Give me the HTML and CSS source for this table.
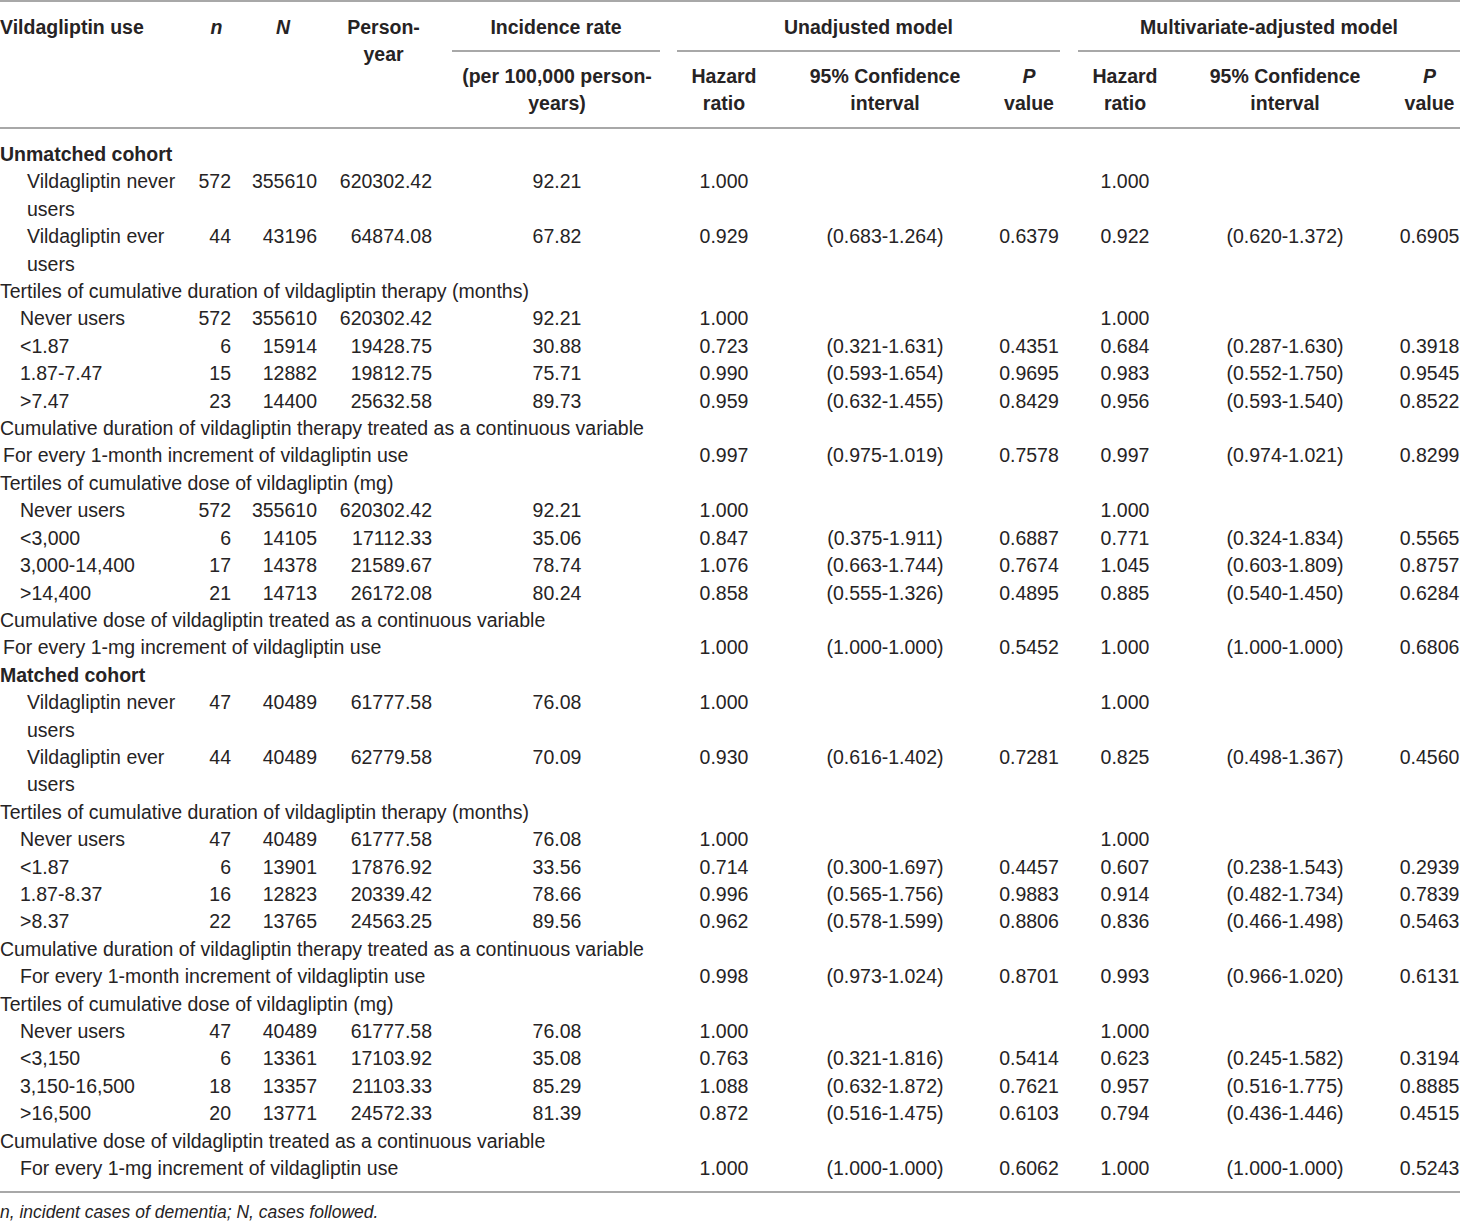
FILE: index.html
```html
<!DOCTYPE html>
<html lang="en">
<head>
    <meta charset="UTF-8">
    <title>Vildagliptin use and dementia risk</title>
    <link rel="stylesheet" href="styles.css">
</head>
<body>
    <table class="data-table">
        <colgroup>
            <col class="c-label">
            <col class="c-n">
            <col class="c-bign">
            <col class="c-py">
            <col class="c-ir">
            <col class="c-hr">
            <col class="c-ci">
            <col class="c-p">
            <col class="c-hr2">
            <col class="c-ci2">
            <col class="c-p2">
        </colgroup>
        <thead>
            <tr class="head-top">
                <th rowspan="2" class="left">Vildagliptin use</th>
                <th rowspan="2"><i>n</i></th>
                <th rowspan="2"><i>N</i></th>
                <th rowspan="2">Person-<br>year</th>
                <th><div class="span-head span-ir">Incidence rate</div></th>
                <th colspan="3"><div class="span-head span-un">Unadjusted model</div></th>
                <th colspan="3"><div class="span-head span-mv">Multivariate-adjusted model</div></th>
            </tr>
            <tr class="head-sub">
                <th>(per 100,000 person-<br>years)</th>
                <th>Hazard<br>ratio</th>
                <th>95% Confidence<br>interval</th>
                <th class="pv"><i>P</i><br>value</th>
                <th>Hazard<br>ratio</th>
                <th>95% Confidence<br>interval</th>
                <th class="pv2"><i>P</i><br>value</th>
            </tr>
        </thead>
        <tbody>
            <tr class="first"><td colspan="11" class="cohort">Unmatched cohort</td></tr>
            <tr><td class="ind2">Vildagliptin never users</td><td class="num">572</td><td class="num">355610</td><td class="num">620302.42</td><td class="ctr">92.21</td><td class="ctr">1.000</td><td></td><td></td><td class="ctr">1.000</td><td></td><td></td></tr>
            <tr><td class="ind2">Vildagliptin ever users</td><td class="num">44</td><td class="num">43196</td><td class="num">64874.08</td><td class="ctr">67.82</td><td class="ctr">0.929</td><td class="ctr">(0.683-1.264)</td><td class="ctr">0.6379</td><td class="ctr">0.922</td><td class="ctr">(0.620-1.372)</td><td class="p2">0.6905</td></tr>
            <tr><td colspan="11">Tertiles of cumulative duration of vildagliptin therapy (months)</td></tr>
            <tr><td class="ind1">Never users</td><td class="num">572</td><td class="num">355610</td><td class="num">620302.42</td><td class="ctr">92.21</td><td class="ctr">1.000</td><td></td><td></td><td class="ctr">1.000</td><td></td><td></td></tr>
            <tr><td class="ind1">&lt;1.87</td><td class="num">6</td><td class="num">15914</td><td class="num">19428.75</td><td class="ctr">30.88</td><td class="ctr">0.723</td><td class="ctr">(0.321-1.631)</td><td class="ctr">0.4351</td><td class="ctr">0.684</td><td class="ctr">(0.287-1.630)</td><td class="p2">0.3918</td></tr>
            <tr><td class="ind1">1.87-7.47</td><td class="num">15</td><td class="num">12882</td><td class="num">19812.75</td><td class="ctr">75.71</td><td class="ctr">0.990</td><td class="ctr">(0.593-1.654)</td><td class="ctr">0.9695</td><td class="ctr">0.983</td><td class="ctr">(0.552-1.750)</td><td class="p2">0.9545</td></tr>
            <tr><td class="ind1">&gt;7.47</td><td class="num">23</td><td class="num">14400</td><td class="num">25632.58</td><td class="ctr">89.73</td><td class="ctr">0.959</td><td class="ctr">(0.632-1.455)</td><td class="ctr">0.8429</td><td class="ctr">0.956</td><td class="ctr">(0.593-1.540)</td><td class="p2">0.8522</td></tr>
            <tr><td colspan="11">Cumulative duration of vildagliptin therapy treated as a continuous variable</td></tr>
            <tr><td colspan="5" class="ind0">For every 1-month increment of vildagliptin use</td><td class="ctr">0.997</td><td class="ctr">(0.975-1.019)</td><td class="ctr">0.7578</td><td class="ctr">0.997</td><td class="ctr">(0.974-1.021)</td><td class="p2">0.8299</td></tr>
            <tr><td colspan="11">Tertiles of cumulative dose of vildagliptin (mg)</td></tr>
            <tr><td class="ind1">Never users</td><td class="num">572</td><td class="num">355610</td><td class="num">620302.42</td><td class="ctr">92.21</td><td class="ctr">1.000</td><td></td><td></td><td class="ctr">1.000</td><td></td><td></td></tr>
            <tr><td class="ind1">&lt;3,000</td><td class="num">6</td><td class="num">14105</td><td class="num">17112.33</td><td class="ctr">35.06</td><td class="ctr">0.847</td><td class="ctr">(0.375-1.911)</td><td class="ctr">0.6887</td><td class="ctr">0.771</td><td class="ctr">(0.324-1.834)</td><td class="p2">0.5565</td></tr>
            <tr><td class="ind1">3,000-14,400</td><td class="num">17</td><td class="num">14378</td><td class="num">21589.67</td><td class="ctr">78.74</td><td class="ctr">1.076</td><td class="ctr">(0.663-1.744)</td><td class="ctr">0.7674</td><td class="ctr">1.045</td><td class="ctr">(0.603-1.809)</td><td class="p2">0.8757</td></tr>
            <tr><td class="ind1">&gt;14,400</td><td class="num">21</td><td class="num">14713</td><td class="num">26172.08</td><td class="ctr">80.24</td><td class="ctr">0.858</td><td class="ctr">(0.555-1.326)</td><td class="ctr">0.4895</td><td class="ctr">0.885</td><td class="ctr">(0.540-1.450)</td><td class="p2">0.6284</td></tr>
            <tr><td colspan="11">Cumulative dose of vildagliptin treated as a continuous variable</td></tr>
            <tr><td colspan="5" class="ind0">For every 1-mg increment of vildagliptin use</td><td class="ctr">1.000</td><td class="ctr">(1.000-1.000)</td><td class="ctr">0.5452</td><td class="ctr">1.000</td><td class="ctr">(1.000-1.000)</td><td class="p2">0.6806</td></tr>

            <tr><td colspan="11" class="cohort">Matched cohort</td></tr>
            <tr><td class="ind2">Vildagliptin never users</td><td class="num">47</td><td class="num">40489</td><td class="num">61777.58</td><td class="ctr">76.08</td><td class="ctr">1.000</td><td></td><td></td><td class="ctr">1.000</td><td></td><td></td></tr>
            <tr><td class="ind2">Vildagliptin ever users</td><td class="num">44</td><td class="num">40489</td><td class="num">62779.58</td><td class="ctr">70.09</td><td class="ctr">0.930</td><td class="ctr">(0.616-1.402)</td><td class="ctr">0.7281</td><td class="ctr">0.825</td><td class="ctr">(0.498-1.367)</td><td class="p2">0.4560</td></tr>
            <tr><td colspan="11">Tertiles of cumulative duration of vildagliptin therapy (months)</td></tr>
            <tr><td class="ind1">Never users</td><td class="num">47</td><td class="num">40489</td><td class="num">61777.58</td><td class="ctr">76.08</td><td class="ctr">1.000</td><td></td><td></td><td class="ctr">1.000</td><td></td><td></td></tr>
            <tr><td class="ind1">&lt;1.87</td><td class="num">6</td><td class="num">13901</td><td class="num">17876.92</td><td class="ctr">33.56</td><td class="ctr">0.714</td><td class="ctr">(0.300-1.697)</td><td class="ctr">0.4457</td><td class="ctr">0.607</td><td class="ctr">(0.238-1.543)</td><td class="p2">0.2939</td></tr>
            <tr><td class="ind1">1.87-8.37</td><td class="num">16</td><td class="num">12823</td><td class="num">20339.42</td><td class="ctr">78.66</td><td class="ctr">0.996</td><td class="ctr">(0.565-1.756)</td><td class="ctr">0.9883</td><td class="ctr">0.914</td><td class="ctr">(0.482-1.734)</td><td class="p2">0.7839</td></tr>
            <tr><td class="ind1">&gt;8.37</td><td class="num">22</td><td class="num">13765</td><td class="num">24563.25</td><td class="ctr">89.56</td><td class="ctr">0.962</td><td class="ctr">(0.578-1.599)</td><td class="ctr">0.8806</td><td class="ctr">0.836</td><td class="ctr">(0.466-1.498)</td><td class="p2">0.5463</td></tr>
            <tr><td colspan="11">Cumulative duration of vildagliptin therapy treated as a continuous variable</td></tr>
            <tr><td colspan="5" class="ind1">For every 1-month increment of vildagliptin use</td><td class="ctr">0.998</td><td class="ctr">(0.973-1.024)</td><td class="ctr">0.8701</td><td class="ctr">0.993</td><td class="ctr">(0.966-1.020)</td><td class="p2">0.6131</td></tr>
            <tr><td colspan="11">Tertiles of cumulative dose of vildagliptin (mg)</td></tr>
            <tr><td class="ind1">Never users</td><td class="num">47</td><td class="num">40489</td><td class="num">61777.58</td><td class="ctr">76.08</td><td class="ctr">1.000</td><td></td><td></td><td class="ctr">1.000</td><td></td><td></td></tr>
            <tr><td class="ind1">&lt;3,150</td><td class="num">6</td><td class="num">13361</td><td class="num">17103.92</td><td class="ctr">35.08</td><td class="ctr">0.763</td><td class="ctr">(0.321-1.816)</td><td class="ctr">0.5414</td><td class="ctr">0.623</td><td class="ctr">(0.245-1.582)</td><td class="p2">0.3194</td></tr>
            <tr><td class="ind1">3,150-16,500</td><td class="num">18</td><td class="num">13357</td><td class="num">21103.33</td><td class="ctr">85.29</td><td class="ctr">1.088</td><td class="ctr">(0.632-1.872)</td><td class="ctr">0.7621</td><td class="ctr">0.957</td><td class="ctr">(0.516-1.775)</td><td class="p2">0.8885</td></tr>
            <tr><td class="ind1">&gt;16,500</td><td class="num">20</td><td class="num">13771</td><td class="num">24572.33</td><td class="ctr">81.39</td><td class="ctr">0.872</td><td class="ctr">(0.516-1.475)</td><td class="ctr">0.6103</td><td class="ctr">0.794</td><td class="ctr">(0.436-1.446)</td><td class="p2">0.4515</td></tr>
            <tr><td colspan="11">Cumulative dose of vildagliptin treated as a continuous variable</td></tr>
            <tr class="last"><td colspan="5" class="ind1">For every 1-mg increment of vildagliptin use</td><td class="ctr">1.000</td><td class="ctr">(1.000-1.000)</td><td class="ctr">0.6062</td><td class="ctr">1.000</td><td class="ctr">(1.000-1.000)</td><td class="p2">0.5243</td></tr>
        </tbody>
    </table>
    <p class="footnote">n, incident cases of dementia; N, cases followed.</p>
</body>
</html>
```

FILE: styles.css
```css
html, body {
    margin: 0;
    padding: 0;
    background: #fff;
}
body {
    font-family: "Liberation Sans", Arial, sans-serif;
    font-size: 19.5px;
    color: #262324;
    overflow: hidden;
}
.data-table {
    width: 1460px;
    border-collapse: collapse;
    table-layout: fixed;
    border-top: 2px solid #a8a8a8;
    border-bottom: 2px solid #a8a8a8;
}
.c-label { width: 193px; }
.c-n { width: 47px; }
.c-bign { width: 86px; }
.c-py { width: 115px; }
.c-ir { width: 232px; }
.c-hr { width: 102px; }
.c-ci { width: 220px; }
.c-p { width: 68px; }
.c-hr2 { width: 124px; }
.c-ci2 { width: 196px; }
.c-p2 { width: 77px; }

th, td {
    padding: 0;
    line-height: 27.4px;
    vertical-align: top;
    white-space: nowrap;
}
th {
    font-weight: bold;
    text-align: center;
}
th.left {
    text-align: left;
}
.head-top th {
    padding-top: 12px;
    line-height: 27px;
}
.span-head {
    border-bottom: 2px solid #a8a8a8;
    padding-bottom: 9px;
}
.span-ir { margin: 0 13px 0 11px; }
.span-un { margin: 0 3px 0 4px; }
.span-mv { margin: 0 0 0 15px; }
.head-sub th {
    padding-top: 11px;
    padding-bottom: 10px;
    line-height: 27px;
    border-bottom: 2px solid #a8a8a8;
}
.head-top th[rowspan] {
    border-bottom: 2px solid #a8a8a8;
}
.head-sub th.pv2 {
    padding-left: 16px;
}

tbody td {
    white-space: normal;
}
tbody td[colspan] {
    white-space: nowrap;
}
tbody tr.first td {
    padding-top: 12px;
}
tbody tr.last td {
    padding-bottom: 9px;
}
.cohort {
    font-weight: bold;
}
.ind0 { padding-left: 3px; }
.ind1 { padding-left: 20px; }
.ind2 { padding-left: 27px; }
.num {
    text-align: right;
    padding-right: 9px;
}
.ctr {
    text-align: center;
}
.p2 {
    text-align: center;
    padding-left: 16px;
}
.footnote {
    margin: 0;
    padding-top: 8px;
    font-size: 17.5px;
    font-style: italic;
    line-height: 22px;
}
```
